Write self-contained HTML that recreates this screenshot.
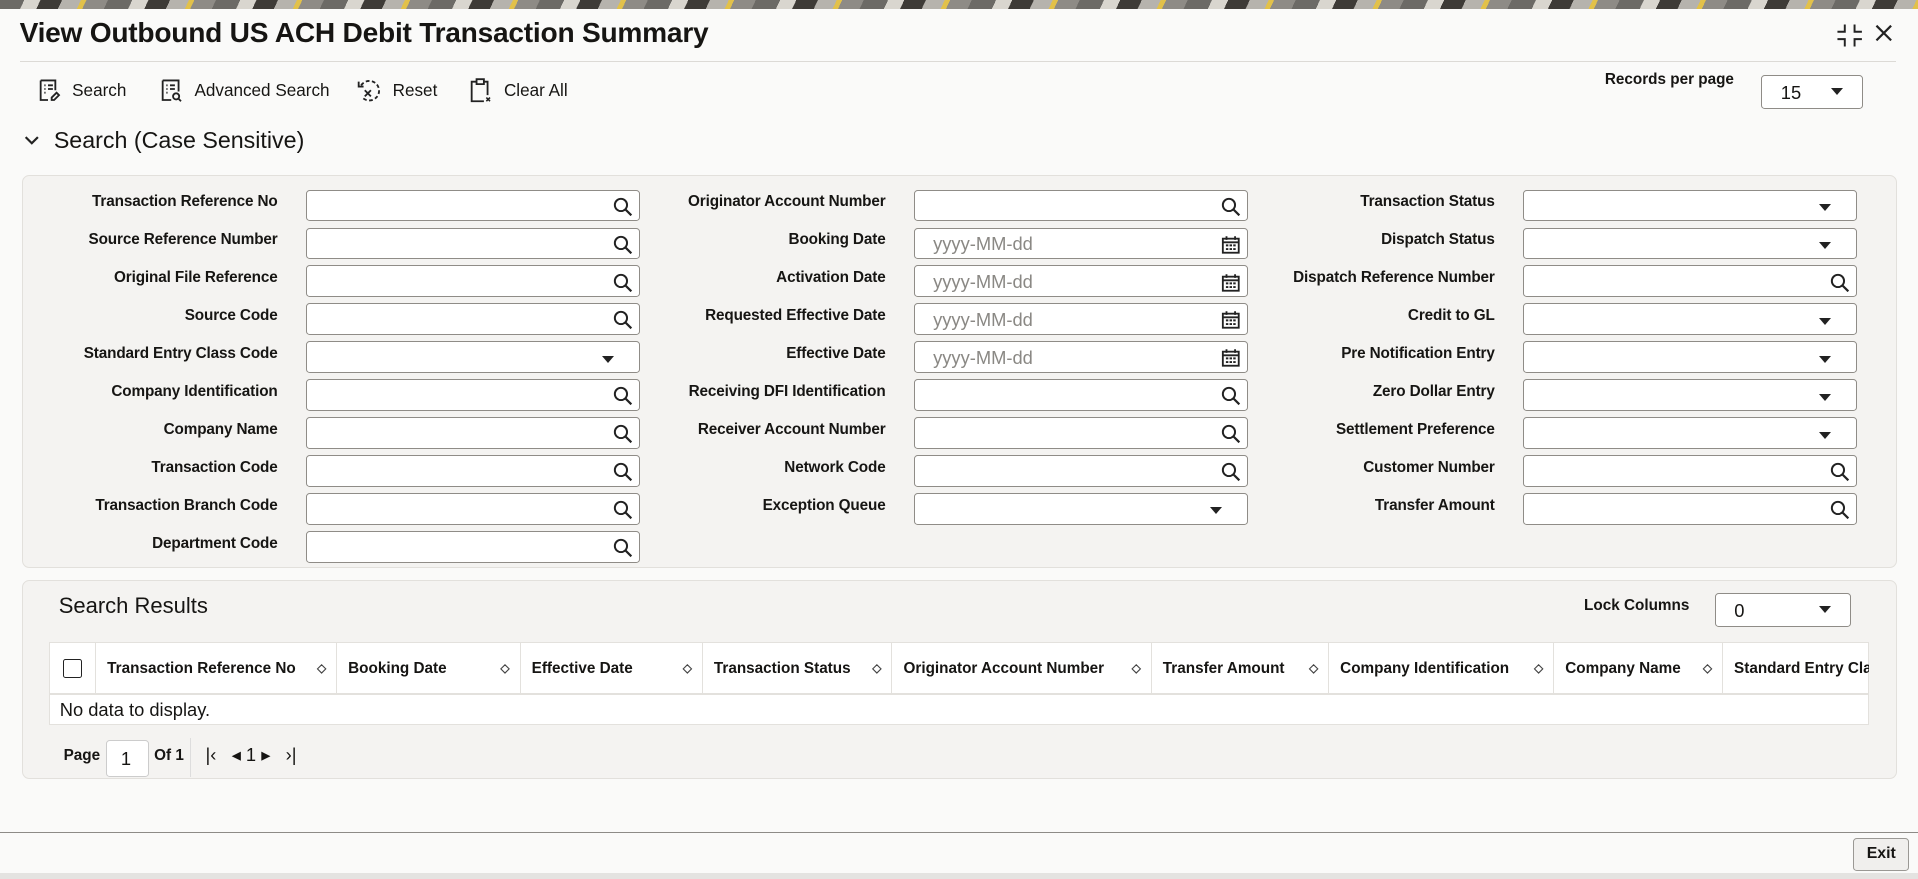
<!DOCTYPE html>
<html><head><meta charset="utf-8"><style>
html,body{margin:0;padding:0;overflow:hidden;}
body{width:1918px;height:879px;background:#fbfbfa;}
#z{zoom:1.22321;width:1568px;height:719px;position:relative;font-family:"Liberation Sans",sans-serif;color:#161513;background:#fafaf9;}
.a{position:absolute;}
.banner{left:0;top:0;width:1568px;height:7px;background:repeating-linear-gradient(115deg,#6c6a66 0 18px,#d9d6cf 18px 30px,#3e3b37 30px 46px,#b6b3ad 46px 60px,#e2c14a 60px 64px,#8e8b86 64px 80px);}
.title{left:16px;top:14px;font-size:23px;font-weight:bold;letter-spacing:-0.2px;}
.tb{top:64px;font-size:14px;display:flex;align-items:center;gap:9px;}
.lbl{font-size:12.5px;font-weight:bold;text-align:right;width:220px;letter-spacing:-0.1px;}
.inp{background:#fff;border:1px solid #8f8c87;border-radius:3px;height:26px;box-sizing:border-box;width:273px;}
.ph{position:absolute;left:15px;top:4px;font-size:15px;color:#8a8884;}
.ic{position:absolute;right:5px;top:5px;}
.panel{background:#f4f3f1;border:1px solid #e2e0dc;border-radius:6px;}
.th{position:absolute;top:0;height:42px;line-height:42px;font-size:12.5px;font-weight:bold;padding-left:9px;border-left:1px solid #e3e1dd;box-sizing:border-box;white-space:nowrap;overflow:hidden;}
.sort{position:absolute;right:8px;top:0;font-size:10px;color:#444;background:#fff;}
</style></head><body><div id="z">
<div class="a banner"></div>
<div class="a title">View Outbound US ACH Debit Transaction Summary</div>
<div class="a" style="left:1500px;top:18px;font-size:18px;">
<svg width="24" height="22" viewBox="0 0 24 22"><path d="M8 2v6H2M16 2v6h6M8 20v-6H2M16 20v-6h6" fill="none" stroke="#222" stroke-width="1.6"/></svg>
</div>
<div class="a" style="left:1532px;top:18px;"><svg width="16" height="18" viewBox="0 0 16 18"><path d="M2 3l12 12M14 3L2 15" stroke="#222" stroke-width="1.8"/></svg></div>
<div class="a" style="left:16px;top:50px;width:1534px;height:1px;background:#dcdad6;"></div>

<div class="a tb" style="left:30px;"><svg width="20" height="20" viewBox="0 0 20 20"><path d="M3 2h12v8M3 2v16h6M6 6h1M9 6h4M6 9h1M9 9h4M6 12h1M12 16l4-4 2 2-4 4h-2z" fill="none" stroke="#222" stroke-width="1.5"/></svg>Search</div>
<div class="a tb" style="left:130px;"><svg width="20" height="20" viewBox="0 0 20 20"><path d="M3 2h13v9M3 2v16h7M6 6h1M9 6h4M6 9h1M9 9h4M6 12h1" fill="none" stroke="#222" stroke-width="1.5"/><circle cx="14" cy="15" r="2.5" fill="none" stroke="#222" stroke-width="1.5"/><path d="M16 17l2 2" stroke="#222" stroke-width="1.5"/></svg>Advanced Search</div>
<div class="a tb" style="left:290px;"><svg width="22" height="20" viewBox="0 0 22 20"><path d="M5 6a8 8 0 1 1 1 10" fill="none" stroke="#222" stroke-width="1.5" stroke-dasharray="3 2"/><path d="M3 3v4h4M8 10l5 5M13 10l-5 5" fill="none" stroke="#222" stroke-width="1.5"/></svg>Reset</div>
<div class="a tb" style="left:383px;"><svg width="20" height="20" viewBox="0 0 20 20"><path d="M7 3H3v16h10M13 3h3v11M7 1h6v4H7z" fill="none" stroke="#222" stroke-width="1.5"/><path d="M15 16l3 3M18 16l-3 3" stroke="#222" stroke-width="1.3"/></svg>Clear All</div>

<div class="a" style="left:1312px;top:58px;font-size:12.5px;font-weight:bold;">Records per page</div>
<div class="a inp" style="left:1440px;top:61px;width:83px;height:28px;"><span class="ph" style="color:#161513;left:15px;top:5px;">15</span><span class="a" style="left:56px;top:10px;border:5px solid transparent;border-top:6px solid #222;"></span></div>

<div class="a" style="left:18px;top:107px;"><svg width="16" height="16" viewBox="0 0 16 16"><path d="M3 5l5 5 5-5" fill="none" stroke="#222" stroke-width="1.8"/></svg></div>
<div class="a" style="left:44px;top:104px;font-size:19px;">Search (Case Sensitive)</div>

<div class="a panel" style="left:18px;top:143px;width:1531px;height:320px;"></div>
<div id="form"></div>

<div class="a panel" style="left:18px;top:474px;width:1531px;height:161px;"></div>
<div class="a" style="left:48px;top:485px;font-size:18px;">Search Results</div>
<div class="a" style="left:1295px;top:488px;font-size:12.5px;font-weight:bold;">Lock Columns</div>
<div class="a inp" style="left:1402px;top:485px;width:111px;height:28px;"><span class="ph" style="color:#161513;top:5px;">0</span><span class="a" style="left:84px;top:10px;border:5px solid transparent;border-top:6px solid #222;"></span></div>

<div class="a" style="left:40px;top:525px;width:1488px;height:68px;background:#fff;border:1px solid #e3e1dd;box-sizing:border-box;">
<div class="th" style="left:0;width:37px;border-left:none;"><span class="a" style="left:11px;top:13px;width:14px;height:14px;border:1.5px solid #222;border-radius:2px;"></span></div>
<div class="th" style="left:37px;width:197px;">Transaction Reference No<span class="sort">◇</span></div>
<div class="th" style="left:234px;width:150px;">Booking Date<span class="sort">◇</span></div>
<div class="th" style="left:384px;width:149px;">Effective Date<span class="sort">◇</span></div>
<div class="th" style="left:533px;width:155px;">Transaction Status<span class="sort">◇</span></div>
<div class="th" style="left:688px;width:212px;">Originator Account Number<span class="sort">◇</span></div>
<div class="th" style="left:900px;width:145px;">Transfer Amount<span class="sort">◇</span></div>
<div class="th" style="left:1045px;width:184px;">Company Identification<span class="sort">◇</span></div>
<div class="th" style="left:1229px;width:138px;">Company Name<span class="sort">◇</span></div>
<div class="th" style="left:1367px;width:120px;">Standard Entry Class Code</div>
<div class="a" style="left:0;top:41px;width:1486px;height:1px;background:#e3e1dd;"></div>
<div class="a" style="left:8px;top:46px;font-size:15px;">No data to display.</div>
</div>
<div class="a" style="left:52px;top:611px;font-size:12.5px;font-weight:bold;">Page</div>
<div class="a inp" style="left:87px;top:605px;width:35px;height:30px;border-color:#ccc;"><span class="ph" style="color:#161513;left:11px;top:6px;">1</span></div>
<div class="a" style="left:126px;top:611px;font-size:12.5px;font-weight:bold;">Of 1</div>
<div class="a" style="left:155px;top:603px;width:1px;height:32px;background:#ddd;"></div>
<div class="a" style="left:168px;top:608px;font-size:15px;">|&lsaquo;&nbsp;&nbsp;&nbsp;◂ 1 ▸&nbsp;&nbsp;&nbsp;&rsaquo;|</div>

<div class="a" style="left:0;top:680px;width:1568px;height:1px;background:#8d8b87;"></div>
<div class="a" style="left:1515px;top:685px;width:46px;height:27px;background:#f0efed;border:1px solid #9a9894;border-radius:3px;box-sizing:border-box;font-size:13px;font-weight:bold;text-align:center;line-height:25px;">Exit</div>
<div class="a" style="left:0;top:714px;width:1568px;height:5px;background:#e4e3e1;"></div>
</div>
<script>
var S='<svg width="16" height="16" viewBox="0 0 16 16"><circle cx="6.5" cy="6.5" r="5" fill="none" stroke="#222" stroke-width="1.6"/><path d="M10 10l5 5" stroke="#222" stroke-width="1.8"/></svg>';
var C='<svg width="16" height="16" viewBox="0 0 16 16"><rect x="1.5" y="3" width="13" height="11.5" fill="none" stroke="#222" stroke-width="1.5"/><path d="M1.5 6h13M4.5 1v3M11.5 1v3" stroke="#222" stroke-width="1.5"/><path d="M4 8.5h2M7 8.5h2M10 8.5h2M4 11.5h2M7 11.5h2M10 11.5h2" stroke="#222" stroke-width="1.6"/></svg>';
var D='<span style="position:absolute;right:20px;top:11px;border:5px solid transparent;border-top:6px solid #222;"></span>';
var cols=[[7,250,[["Transaction Reference No",S],["Source Reference Number",S],["Original File Reference",S],["Source Code",S],["Standard Entry Class Code",D],["Company Identification",S],["Company Name",S],["Transaction Code",S],["Transaction Branch Code",S],["Department Code",S]]],
[504,747,[["Originator Account Number",S],["Booking Date",C,1],["Activation Date",C,1],["Requested Effective Date",C,1],["Effective Date",C,1],["Receiving DFI Identification",S],["Receiver Account Number",S],["Network Code",S],["Exception Queue",D]]],
[1002,1245,[["Transaction Status",D],["Dispatch Status",D],["Dispatch Reference Number",S],["Credit to GL",D],["Pre Notification Entry",D],["Zero Dollar Entry",D],["Settlement Preference",D],["Customer Number",S],["Transfer Amount",S]]]];
var h='';
cols.forEach(function(c){c[2].forEach(function(r,i){var y=155+i*31;
h+='<div class="a lbl" style="left:'+c[0]+'px;top:'+(y+3)+'px;">'+r[0]+'</div>';
h+='<div class="a inp" style="left:'+c[1]+'px;top:'+y+'px;">'+(r[2]?'<span class="ph">yyyy-MM-dd</span>':'')+(r[1]==D?D:'<span class="ic">'+r[1]+'</span>')+'</div>';});});
document.getElementById('form').outerHTML=h;
</script>
</body></html>
